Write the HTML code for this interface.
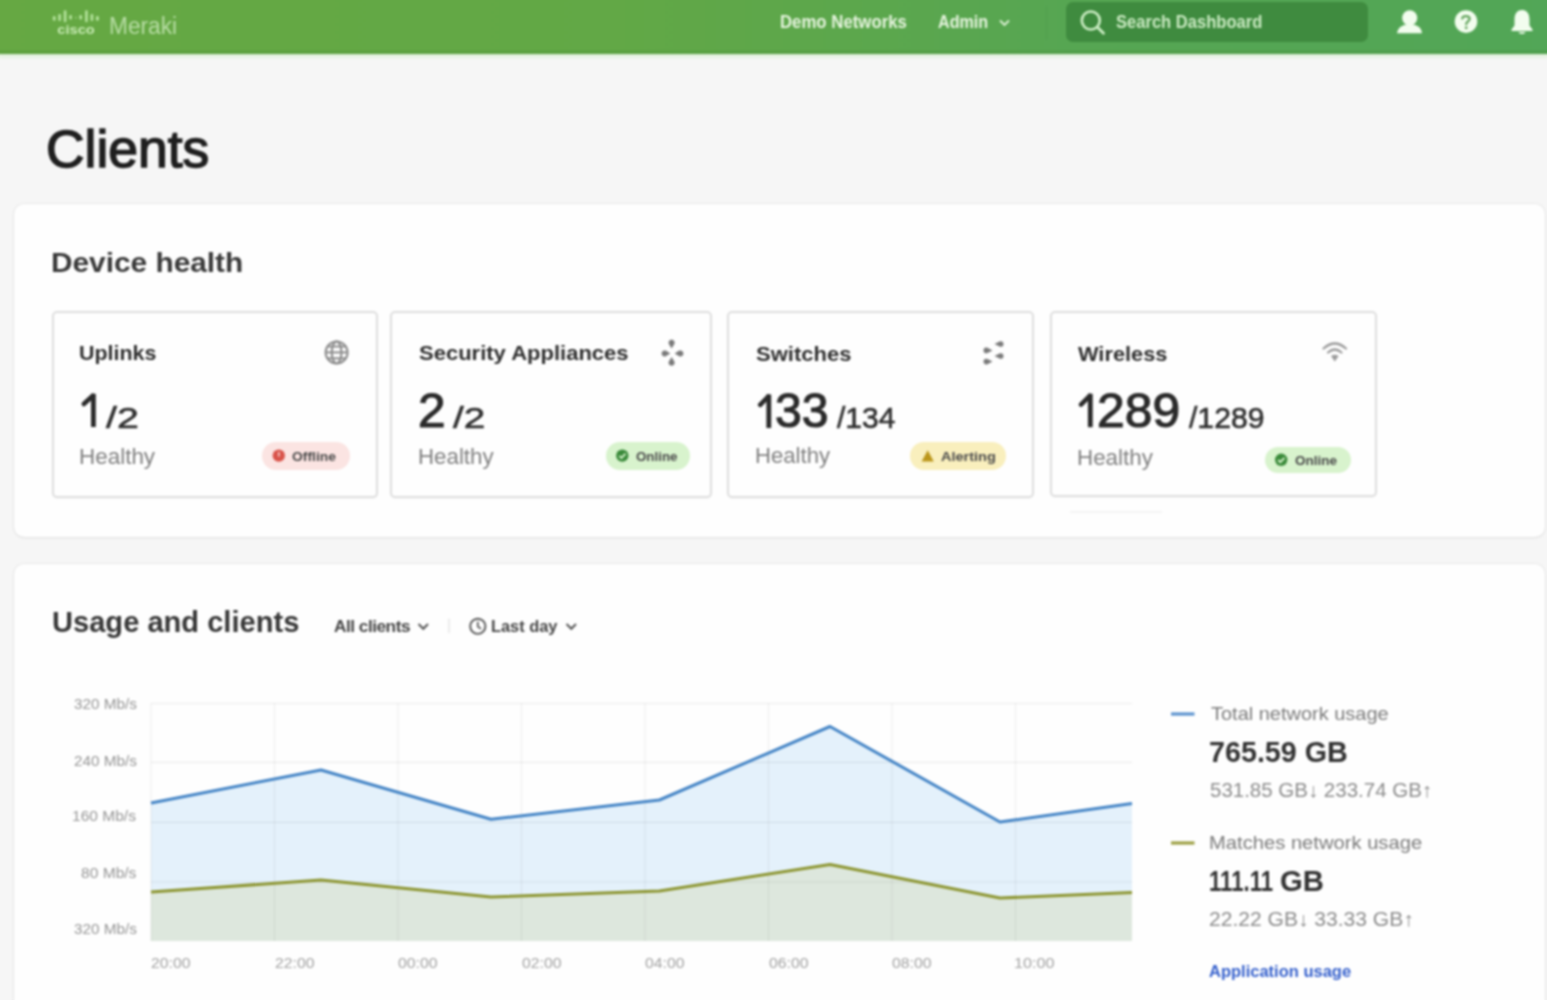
<!DOCTYPE html>
<html><head><meta charset="utf-8"><title>Clients</title>
<style>
*{margin:0;padding:0;box-sizing:border-box}
html,body{width:1547px;height:1000px;overflow:hidden;background:#f6f6f6;font-family:"Liberation Sans",sans-serif}
.tx{position:absolute;white-space:nowrap;transform-origin:0 0}
.abs{position:absolute}
#hdr{position:absolute;left:-12px;top:-12px;width:1571px;height:66px;background:linear-gradient(90deg,#66a843 0%,#62a846 40%,#56a653 70%,#52a657 100%)}
#hdrline{position:absolute;left:-12px;top:50px;width:1571px;height:4px;background:linear-gradient(180deg,rgba(70,140,50,0.15),rgba(70,140,50,0.35))}
#search{position:absolute;left:1066px;top:2px;width:302px;height:40px;border-radius:7px;background:#3f8b3f}
.panel{position:absolute;background:#fefefe;border-radius:10px;box-shadow:0 0 0 1px rgba(0,0,0,0.045),0 1px 3px rgba(0,0,0,0.06)}
.card{position:absolute;background:#fefefe;border:2px solid #dedede;border-radius:5px;box-shadow:0 1px 1px rgba(0,0,0,0.03)}
.badge{position:absolute;border-radius:14px}
#hdrglow{position:absolute;left:-12px;top:54px;width:1571px;height:6px;background:linear-gradient(180deg,rgba(200,235,190,0.55),rgba(246,246,246,0))}
#wrap{position:absolute;left:-12px;top:-12px;width:1571px;height:1024px;overflow:hidden;filter:blur(1px)}
#inner{position:absolute;left:12px;top:12px;width:1547px;height:1000px;background:#f6f6f6}

</style></head><body><div id="wrap"><div id="inner">
<div id="hdr"></div>
<div id="hdrline"></div>
<div id="hdrglow"></div>
<svg class="abs" style="left:0;top:0" width="1547" height="53">
  <g fill="#b4e39c">
    <rect x="52.8" y="16" width="2.8" height="4.8" rx="1.4"/>
    <rect x="58.3" y="14" width="2.6" height="7" rx="1.2"/>
    <rect x="63.8" y="10.2" width="2.6" height="12" rx="1.2"/>
    <rect x="69.3" y="15" width="2.6" height="4.5" rx="1.2"/>
    <rect x="75" y="16.5" width="1.8" height="2.5" rx="0.9" opacity="0.5"/>
    <rect x="79.4" y="15" width="2.6" height="4.5" rx="1.2"/>
    <rect x="85.1" y="10.2" width="2.6" height="12" rx="1.2"/>
    <rect x="90.6" y="14" width="2.6" height="7" rx="1.2"/>
    <rect x="96" y="16" width="2.8" height="4.8" rx="1.4"/>
  </g>
  <text x="57.3" y="34.3" font-family="Liberation Sans" font-weight="700" font-size="12.5" fill="#c6eab2" textLength="37.5" lengthAdjust="spacingAndGlyphs">cisco</text>
  <path d="M1000 20.5 L1004.5 25 L1009 20.5" stroke="#dff2d6" stroke-width="1.8" fill="none"/>
  <line x1="1046.5" y1="6" x2="1046.5" y2="40" stroke="rgba(40,110,40,0.12)" stroke-width="1"/>
</svg>
<div id="search"></div>
<svg class="abs" style="left:0;top:0" width="1547" height="53">
  <circle cx="1090.8" cy="20.5" r="9" stroke="#cdeec5" stroke-width="2.6" fill="none"/>
  <line x1="1097.5" y1="27.3" x2="1103.5" y2="33.2" stroke="#cdeec5" stroke-width="2.8" stroke-linecap="round"/>
  <!-- person -->
  <g fill="#f2fdee">
    <circle cx="1409.7" cy="17.8" r="7.6"/>
    <path d="M1397 33.2 C1398 27 1403 24.3 1409.7 24.3 C1416.4 24.3 1421.4 27 1422 33.2 Z"/>
  </g>
  <!-- help -->
  <circle cx="1466" cy="21.6" r="11.3" fill="#f2fdee"/>
  <path d="M1462.3 18.6 C1462.3 15.4 1469.7 15.2 1469.7 18.8 C1469.7 21.3 1466.2 21.5 1466.2 24.3" stroke="#62a35c" stroke-width="2.2" fill="none" stroke-linecap="round"/>
  <circle cx="1466.2" cy="27.8" r="1.4" fill="#62a35c"/>
  <!-- bell -->
  <path d="M1522 10 C1516.5 10 1514.5 14.5 1514.5 19.5 L1514.5 25.5 L1511.5 29.5 L1511.5 31 L1532.5 31 L1532.5 29.5 L1529.5 25.5 L1529.5 19.5 C1529.5 14.5 1527.5 10 1522 10 Z" fill="#f2fdee"/>
  <path d="M1518.5 32 C1519 34.5 1525 34.5 1525.5 32 Z" fill="#f2fdee"/>
</svg>

<!-- panel 1 -->
<div class="panel" style="left:14px;top:204px;width:1531px;height:333px"></div>
<div class="card" style="left:52px;top:311px;width:326px;height:187px"></div>
<div class="card" style="left:390px;top:311px;width:322px;height:187px"></div>
<div class="card" style="left:727px;top:311px;width:307px;height:187px"></div>
<div class="card" style="left:1050px;top:311px;width:327px;height:186px"></div>
<div class="abs" style="left:1070px;top:511px;width:92px;height:2px;background:#f4f4f4"></div>

<div class="badge" style="left:262px;top:442px;width:88px;height:27.5px;background:#fbe4e2"></div>
<div class="badge" style="left:606px;top:442px;width:84px;height:27.5px;background:#d8f3cd"></div>
<div class="badge" style="left:910px;top:441.5px;width:96px;height:28.5px;background:#f9efbd"></div>
<div class="badge" style="left:1265px;top:447px;width:86px;height:25.5px;background:#d8f3cd"></div>

<svg class="abs" style="left:0;top:0" width="1547" height="560">
  <!-- globe -->
  <g stroke="#8c8c8c" stroke-width="2" fill="none">
    <circle cx="336.6" cy="352.4" r="11"/>
    <ellipse cx="336.6" cy="352.4" rx="4.8" ry="11"/>
    <line x1="325.6" y1="352.4" x2="347.6" y2="352.4"/>
    <line x1="327" y1="346.5" x2="346.2" y2="346.5"/>
    <line x1="327" y1="358.3" x2="346.2" y2="358.3"/>
  </g>
  <!-- security compass -->
  <g fill="#7a7a7a">
    <path d="M671.6 339.8 C674.4 339.8 675 342.4 674.4 344 L671.6 348.5 L668.8 344 C668.2 342.4 668.8 339.8 671.6 339.8Z"/>
    <path d="M671.6 365.8 C674.4 365.8 675 363.2 674.4 361.6 L671.6 357.1 L668.8 361.6 C668.2 363.2 668.8 365.8 671.6 365.8Z"/>
    <path d="M661.6 353.4 C661.6 350.6 664.2 350 665.8 350.6 L670.3 353.4 L665.8 356.2 C664.2 356.8 661.6 356.2 661.6 353.4Z"/>
    <path d="M683.4 353.4 C683.4 350.6 680.8 350 679.2 350.6 L674.7 353.4 L679.2 356.2 C680.8 356.8 683.4 356.2 683.4 353.4Z"/>
  </g>
  <!-- switches -->
  <g fill="#7a7a7a">
    <path d="M983.5 350.4 C983.5 347.6 986 347.3 987.5 347.8 L992.5 350.4 L987.5 353 C986 353.5 983.5 353.2 983.5 350.4Z"/>
    <path d="M983.5 361.6 C983.5 358.8 986 358.5 987.5 359 L992.5 361.6 L987.5 364.2 C986 364.7 983.5 364.4 983.5 361.6Z"/>
    <path d="M1003.5 344 C1003.5 341.2 1001 340.9 999.5 341.4 L994.5 344 L999.5 346.6 C1001 347.1 1003.5 346.8 1003.5 344Z"/>
    <path d="M1003.5 356 C1003.5 353.2 1001 352.9 999.5 353.4 L994.5 356 L999.5 358.6 C1001 359.1 1003.5 358.8 1003.5 356Z"/>
  </g>
  <!-- wifi -->
  <g stroke="#9a9a9a" stroke-width="2.2" fill="none" stroke-linecap="round">
    <path d="M1323.5 348.5 Q1334.8 338.5 1346 348.5"/>
    <path d="M1328 352.5 Q1334.8 346.5 1341.5 352.5"/>
  </g>
  <path d="M1331 356 Q1334.8 353.5 1338.6 356 L1334.8 361.5 Z" fill="#9a9a9a"/>
  <!-- badge icons -->
  <circle cx="278.8" cy="455.6" r="6.2" fill="#d9534a"/>
  <rect x="278" y="452" width="1.6" height="4.5" fill="#f7d0cc"/>
  <circle cx="622.3" cy="455.6" r="6.2" fill="#3a8a3a"/>
  <path d="M619.3 455.8 L621.5 458 L625.5 453.6" stroke="#d8f3cd" stroke-width="1.8" fill="none"/>
  <path d="M927.7 450.3 L933.8 461.5 L921.6 461.5 Z" fill="#bb961a"/>
  <circle cx="1281.2" cy="459.8" r="6.2" fill="#3a8a3a"/>
  <path d="M1278.2 460 L1280.4 462.2 L1284.4 457.8" stroke="#d8f3cd" stroke-width="1.8" fill="none"/>
</svg>

<svg class="abs" style="left:0;top:0" width="1547" height="560">
  <rect x="91.0" y="393.8" width="4.8" height="33.2" fill="#2a2a2a"/>
  <line x1="92.8" y1="395.8" x2="83.8" y2="404.0" stroke="#2a2a2a" stroke-width="4.6" stroke-linecap="round"/>
  <rect x="766.4" y="394.5" width="4.8" height="33.5" fill="#2a2a2a"/>
  <line x1="768.2" y1="396.5" x2="760.2" y2="404.8" stroke="#2a2a2a" stroke-width="4.6" stroke-linecap="round"/>
  <rect x="1087.9" y="393.8" width="4.8" height="33.4" fill="#2a2a2a"/>
  <line x1="1089.7" y1="395.8" x2="1081.0" y2="404.6" stroke="#2a2a2a" stroke-width="4.6" stroke-linecap="round"/>
</svg>
<!-- panel 2 -->
<div class="panel" style="left:14px;top:564px;width:1531px;height:460px"></div>
<svg class="abs" style="left:0;top:560px" width="1547" height="440">
  <path d="M418.5 64 L423.3 68.8 L428 64" stroke="#555" stroke-width="2" fill="none"/>
  <line x1="449" y1="58.6" x2="449" y2="73" stroke="#e6e6e6" stroke-width="1.5"/>
  <circle cx="477.8" cy="66.3" r="7.6" stroke="#555" stroke-width="1.9" fill="none"/>
  <path d="M477.8 61.8 L477.8 66.6 L481 68.8" stroke="#555" stroke-width="1.7" fill="none"/>
  <path d="M566.5 64 L571.3 68.8 L576 64" stroke="#555" stroke-width="2" fill="none"/>
</svg>
<svg class="abs" style="left:0;top:0" width="1547" height="1000">
  <polygon fill="#e4f1fb" points="151,803 321,770 491,819.3 659.4,800 830,726.5 1000,822 1132,803.4 1132,941 151,941"/>
  <polygon fill="#dde7dd" points="151,892 321,880 491,897 659.4,891 830,864.5 1000,898 1132,892.5 1132,941 151,941"/>
  <g stroke="rgba(0,0,0,0.06)" stroke-width="1.2">
    <line x1="151" y1="703" x2="151" y2="941"/>
    <line x1="274.5" y1="703" x2="274.5" y2="941"/>
    <line x1="398.0" y1="703" x2="398.0" y2="941"/>
    <line x1="521.5" y1="703" x2="521.5" y2="941"/>
    <line x1="645.0" y1="703" x2="645.0" y2="941"/>
    <line x1="768.5" y1="703" x2="768.5" y2="941"/>
    <line x1="892.0" y1="703" x2="892.0" y2="941"/>
    <line x1="1015.5" y1="703" x2="1015.5" y2="941"/>
  </g>
  <g stroke="rgba(0,0,0,0.07)" stroke-width="1.2">
    <line x1="151" y1="703.5" x2="1132" y2="703.5"/>
    <line x1="151" y1="762.4" x2="1132" y2="762.4"/>
    <line x1="151" y1="822.3" x2="1132" y2="822.3"/>
    <line x1="151" y1="882" x2="1132" y2="882"/>
  </g>
  <polyline fill="none" stroke="#4585c6" stroke-width="3" stroke-linejoin="round" points="151,803 321,770 491,819.3 659.4,800 830,726.5 1000,822 1132,803.4"/>
  <polyline fill="none" stroke="#8d9632" stroke-width="3" stroke-linejoin="round" points="151,892 321,880 491,897 659.4,891 830,864.5 1000,898 1132,892.5"/>
  <line x1="1171" y1="714" x2="1194.5" y2="714" stroke="#5b93cf" stroke-width="3.2"/>
  <line x1="1171" y1="843" x2="1194.5" y2="843" stroke="#9da044" stroke-width="3.2"/>
</svg>

<div class="tx" style="left:108.54px;top:14.52px;font-size:23.62px;line-height:23.62px;font-weight:400;color:rgba(214,240,200,0.72);transform:scaleX(0.9622);">Meraki</div>
<div class="tx" style="left:780.04px;top:13.99px;font-size:17.54px;line-height:17.54px;font-weight:700;color:#e6f4de;transform:scaleX(0.9572);">Demo Networks</div>
<div class="tx" style="left:937.50px;top:13.99px;font-size:17.54px;line-height:17.54px;font-weight:700;color:#e6f4de;transform:scaleX(0.9203);">Admin</div>
<div class="tx" style="left:1116.00px;top:13.33px;font-size:18.55px;line-height:18.55px;font-weight:700;color:#c9e9c1;transform:scaleX(0.8933);">Search Dashboard</div>
<div class="tx" style="left:45.95px;top:122.65px;font-size:52.17px;line-height:52.17px;font-weight:400;color:#1f1f1f;transform:scaleX(1.0234);-webkit-text-stroke:1.5px #1f1f1f">Clients</div>
<div class="tx" style="left:51.43px;top:248.82px;font-size:27.97px;line-height:27.97px;font-weight:700;color:#393939;transform:scaleX(1.0660);">Device health</div>
<div class="tx" style="left:78.95px;top:342.73px;font-size:20.43px;line-height:20.43px;font-weight:700;color:#2f2f2f;transform:scaleX(1.0497);">Uplinks</div>
<div class="tx" style="left:106.00px;top:402.59px;font-size:29.42px;line-height:29.42px;font-weight:400;color:#2f2f2f;transform:scaleX(1.3379);-webkit-text-stroke:0.6px #2f2f2f">/2</div>
<div class="tx" style="left:78.99px;top:445.75px;font-size:22.17px;line-height:22.17px;font-weight:400;color:#808080;transform:scaleX(1.0127);">Healthy</div>
<div class="tx" style="left:418.60px;top:343.23px;font-size:20.43px;line-height:20.43px;font-weight:700;color:#2f2f2f;transform:scaleX(1.0777);">Security Appliances</div>
<div class="tx" style="left:417.91px;top:386.89px;font-size:47.54px;line-height:47.54px;font-weight:400;color:#2a2a2a;transform:scaleX(1.0435);-webkit-text-stroke:1.1px #2a2a2a">2</div>
<div class="tx" style="left:452.50px;top:402.79px;font-size:29.42px;line-height:29.42px;font-weight:400;color:#2f2f2f;transform:scaleX(1.3164);-webkit-text-stroke:0.6px #2f2f2f">/2</div>
<div class="tx" style="left:417.59px;top:445.75px;font-size:22.17px;line-height:22.17px;font-weight:400;color:#808080;transform:scaleX(1.0061);">Healthy</div>
<div class="tx" style="left:756.30px;top:343.73px;font-size:20.43px;line-height:20.43px;font-weight:700;color:#2f2f2f;transform:scaleX(1.0775);">Switches</div>
<div class="tx" style="left:775.49px;top:386.89px;font-size:47.54px;line-height:47.54px;font-weight:400;color:#2a2a2a;transform:scaleX(1.0114);-webkit-text-stroke:1.1px #2a2a2a">33</div>
<div class="tx" style="left:837.00px;top:402.79px;font-size:29.42px;line-height:29.42px;font-weight:400;color:#2f2f2f;transform:scaleX(1.0197);-webkit-text-stroke:0.6px #2f2f2f">/134</div>
<div class="tx" style="left:755.30px;top:445.45px;font-size:22.17px;line-height:22.17px;font-weight:400;color:#808080;transform:scaleX(0.9994);">Healthy</div>
<div class="tx" style="left:1077.70px;top:343.73px;font-size:20.43px;line-height:20.43px;font-weight:700;color:#2f2f2f;transform:scaleX(1.0663);">Wireless</div>
<div class="tx" style="left:1097.40px;top:386.89px;font-size:47.54px;line-height:47.54px;font-weight:400;color:#2a2a2a;transform:scaleX(1.0481);-webkit-text-stroke:1.1px #2a2a2a">289</div>
<div class="tx" style="left:1188.70px;top:402.99px;font-size:29.42px;line-height:29.42px;font-weight:400;color:#2f2f2f;transform:scaleX(1.0245);-webkit-text-stroke:0.6px #2f2f2f">/1289</div>
<div class="tx" style="left:1076.69px;top:446.75px;font-size:22.17px;line-height:22.17px;font-weight:400;color:#808080;transform:scaleX(1.0101);">Healthy</div>
<div class="tx" style="left:291.60px;top:449.64px;font-size:13.48px;line-height:13.48px;font-weight:700;color:#4a4a4a;transform:scaleX(1.0311);">Offline</div>
<div class="tx" style="left:636.00px;top:449.64px;font-size:13.48px;line-height:13.48px;font-weight:700;color:#4a4a4a;transform:scaleX(0.9902);">Online</div>
<div class="tx" style="left:940.50px;top:450.14px;font-size:13.48px;line-height:13.48px;font-weight:700;color:#4a4a4a;transform:scaleX(1.0759);">Alerting</div>
<div class="tx" style="left:1294.50px;top:453.64px;font-size:13.48px;line-height:13.48px;font-weight:700;color:#4a4a4a;transform:scaleX(1.0020);">Online</div>
<div class="tx" style="left:51.71px;top:606.89px;font-size:29.42px;line-height:29.42px;font-weight:700;color:#383838;transform:scaleX(0.9892);">Usage and clients</div>
<div class="tx" style="left:333.60px;top:618.06px;font-size:17.10px;line-height:17.10px;font-weight:700;color:#454545;transform:scaleX(1.0101);letter-spacing:-0.5px">All clients</div>
<div class="tx" style="left:491.04px;top:618.06px;font-size:17.10px;line-height:17.10px;font-weight:700;color:#454545;transform:scaleX(0.9587);">Last day</div>
<div class="tx" style="left:73.50px;top:697.43px;font-size:14.78px;line-height:14.78px;font-weight:400;color:#969696;transform:scaleX(1.0356);">320 Mb/s</div>
<div class="tx" style="left:73.50px;top:753.63px;font-size:14.78px;line-height:14.78px;font-weight:400;color:#969696;transform:scaleX(1.0356);">240 Mb/s</div>
<div class="tx" style="left:72.45px;top:809.03px;font-size:14.78px;line-height:14.78px;font-weight:400;color:#969696;transform:scaleX(1.0530);">160 Mb/s</div>
<div class="tx" style="left:81.00px;top:865.53px;font-size:14.78px;line-height:14.78px;font-weight:400;color:#969696;transform:scaleX(1.0548);">80 Mb/s</div>
<div class="tx" style="left:73.50px;top:922.03px;font-size:14.78px;line-height:14.78px;font-weight:400;color:#969696;transform:scaleX(1.0356);">320 Mb/s</div>
<div class="tx" style="left:151.00px;top:955.27px;font-size:15.22px;line-height:15.22px;font-weight:400;color:#a2a2a2;transform:scaleX(1.0375);">20:00</div>
<div class="tx" style="left:274.50px;top:955.27px;font-size:15.22px;line-height:15.22px;font-weight:400;color:#a2a2a2;transform:scaleX(1.0375);">22:00</div>
<div class="tx" style="left:398.00px;top:955.27px;font-size:15.22px;line-height:15.22px;font-weight:400;color:#a2a2a2;transform:scaleX(1.0375);">00:00</div>
<div class="tx" style="left:521.50px;top:955.27px;font-size:15.22px;line-height:15.22px;font-weight:400;color:#a2a2a2;transform:scaleX(1.0375);">02:00</div>
<div class="tx" style="left:645.00px;top:955.27px;font-size:15.22px;line-height:15.22px;font-weight:400;color:#a2a2a2;transform:scaleX(1.0375);">04:00</div>
<div class="tx" style="left:768.50px;top:955.27px;font-size:15.22px;line-height:15.22px;font-weight:400;color:#a2a2a2;transform:scaleX(1.0375);">06:00</div>
<div class="tx" style="left:892.00px;top:955.27px;font-size:15.22px;line-height:15.22px;font-weight:400;color:#a2a2a2;transform:scaleX(1.0375);">08:00</div>
<div class="tx" style="left:1014.43px;top:955.27px;font-size:15.22px;line-height:15.22px;font-weight:400;color:#a2a2a2;transform:scaleX(1.0659);">10:00</div>
<div class="tx" style="left:1210.70px;top:705.13px;font-size:18.55px;line-height:18.55px;font-weight:400;color:#7c7c7c;transform:scaleX(1.0777);">Total network usage</div>
<div class="tx" style="left:1208.82px;top:736.59px;font-size:29.42px;line-height:29.42px;font-weight:700;color:#333333;transform:scaleX(0.9758);">765.59 GB</div>
<div class="tx" style="left:1209.80px;top:780.00px;font-size:20.00px;line-height:20.00px;font-weight:400;color:#8c8c8c;transform:scaleX(1.0242);">531.85 GB↓ 233.74 GB↑</div>
<div class="tx" style="left:1208.71px;top:834.23px;font-size:18.55px;line-height:18.55px;font-weight:400;color:#7c7c7c;transform:scaleX(1.0890);">Matches network usage</div>
<div class="tx" style="left:1209.05px;top:865.79px;font-size:29.42px;line-height:29.42px;font-weight:700;color:#333333;transform:scaleX(0.7549);">111.11</div>
<div class="tx" style="left:1280.30px;top:865.79px;font-size:29.42px;line-height:29.42px;font-weight:700;color:#333333;transform:scaleX(0.9959);">GB</div>
<div class="tx" style="left:1208.95px;top:909.10px;font-size:20.00px;line-height:20.00px;font-weight:400;color:#8c8c8c;transform:scaleX(1.0524);">22.22 GB↓ 33.33 GB↑</div>
<div class="tx" style="left:1209.00px;top:962.68px;font-size:16.38px;line-height:16.38px;font-weight:700;color:#3560cc;transform:scaleX(1.0086);">Application usage</div>
</div></div></body></html>
